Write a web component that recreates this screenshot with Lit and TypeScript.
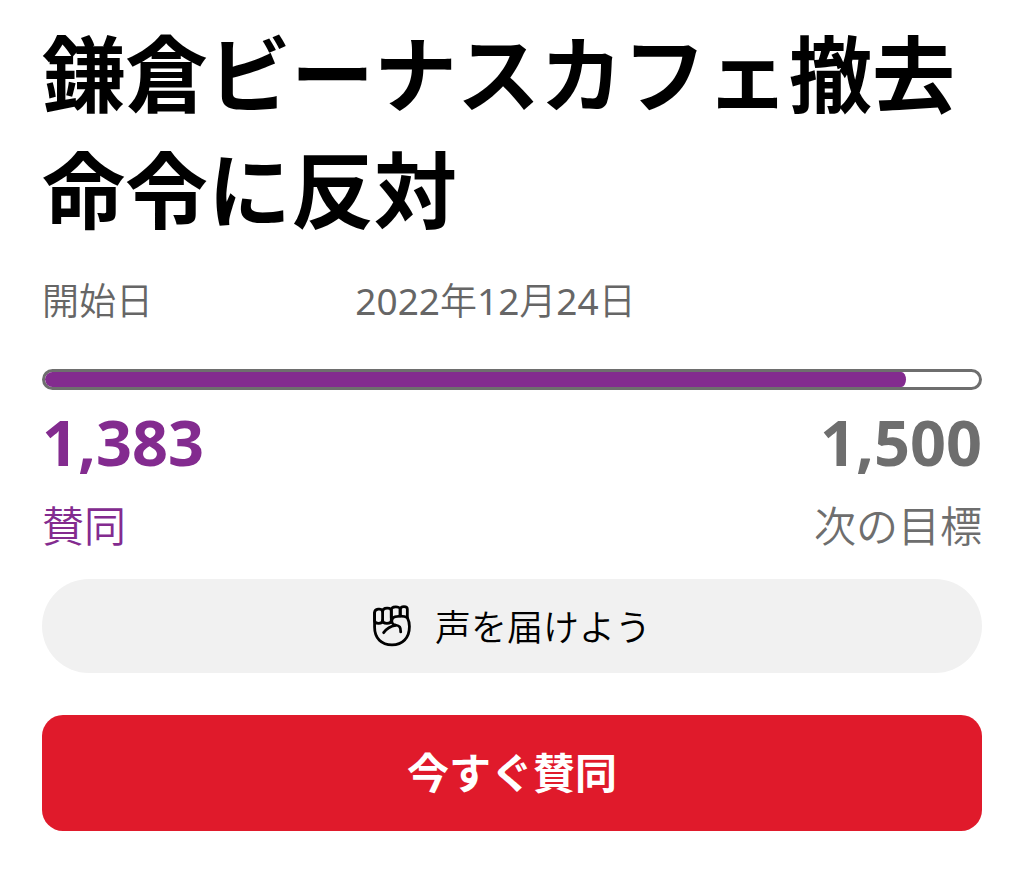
import { LitElement, html, css } from "lit";
import { customElement, property } from "lit/decorators.js";

@customElement("app-root")
export class AppRoot extends LitElement {
  @property({ type: Number }) signatures = 1383;
  @property({ type: Number }) goal = 1500;

  static styles = css`
    :host {
      display: block;
      background: #fff;
      color: #000;
      font-family: "Noto Sans", "Noto Sans CJK JP", sans-serif;
    }
    * { box-sizing: border-box; }
    main { padding: 16px 42px 42px; }
    h1 {
      margin: 0;
      font-size: 83px;
      line-height: 116px;
      font-weight: 700;
    }
    .started {
      display: grid;
      grid-template-columns: 1fr 2fr;
      margin: 29px 0 0;
      font-size: 37px;
      line-height: 48px;
      font-weight: 350;
      color: #666;
    }
    .started dd { margin: 0; }
    .digits { font-weight: 400; }
    .track {
      height: 21px;
      margin-top: 44px;
      border: 3px solid #6e6e6e;
      border-radius: 11px;
      background: #fff;
      overflow: hidden;
    }
    .fill {
      height: 100%;
      border-radius: 5px / 8px;
      background: #832b8f;
    }
    .counts {
      display: flex;
      justify-content: space-between;
      margin-top: 10px;
      color: #6e6e6e;
    }
    .count:first-child { color: #832b8f; }
    .count:last-child { text-align: right; }
    .number { font-size: 63px; line-height: 84px; font-weight: 700; }
    .label { margin-top: 12px; font-size: 42px; line-height: 60px; font-weight: 350; }
    .voice, .sign {
      display: flex;
      align-items: center;
      justify-content: center;
      width: 100%;
      border: 0;
      font-family: inherit;
      cursor: pointer;
    }
    .voice {
      gap: 22px;
      height: 94px;
      margin-top: 23px;
      padding: 0 2px 2px 0;
      border-radius: 47px;
      background: #f1f1f1;
      color: #000;
      font-size: 36px;
      font-weight: 350;
    }
    .voice svg { width: 42px; height: 46px; }
    .sign {
      height: 116px;
      margin-top: 42px;
      padding: 0 0 6px;
      border-radius: 21px;
      background: #e01a2b;
      color: #fff;
      font-size: 42px;
      font-weight: 700;
    }
  `;

  render() {
    const share = Math.min(100, (this.signatures / this.goal) * 100);
    return html`
      <main lang="ja">
        <h1>鎌倉ビーナスカフェ撤去命令に反対</h1>
        <dl class="started">
          <dt>開始日</dt>
          <dd><span class="digits">2022</span>年<span class="digits">12</span>月<span class="digits">24</span>日</dd>
        </dl>
        <div class="track" role="progressbar" aria-label="賛同" aria-valuenow=${this.signatures} aria-valuemin="0" aria-valuemax=${this.goal}>
          <div class="fill" style="width:${share}%"></div>
        </div>
        <div class="counts">
          <div class="count"><div class="number">${this.signatures.toLocaleString("en-US")}</div><div class="label">賛同</div></div>
          <div class="count"><div class="number">${this.goal.toLocaleString("en-US")}</div><div class="label">次の目標</div></div>
        </div>
        <button class="voice" type="button">
          <svg viewBox="36 27 120 132" fill="none" stroke="currentColor" stroke-width="8" stroke-linecap="round" stroke-linejoin="round" aria-hidden="true">
            <path d="M46 58V99C46 132 66 150 96 150S146 130 146 97C146 84 143 78 140 72V48C140 38 121 38 120 48V67" />
            <path d="M46 80V58C46 46 66 44 69 54V80C69 91 46 91 46 80" />
            <path d="M69 54C70 42 93 42 94 52V80C94 91 69 91 69 80" />
            <path d="M94 72V50C94 38 119 38 119 48V67" />
            <path d="M140 72C134 68 124 67 112 68C90 69 92 91 106 93C118 95 121 98 121 113" />
            <path d="M106 94C91 96 80 104 72 115" />
          </svg>
          <span>声を届けよう</span>
        </button>
        <button class="sign" type="button">今すぐ賛同</button>
      </main>
    `;
  }
}
